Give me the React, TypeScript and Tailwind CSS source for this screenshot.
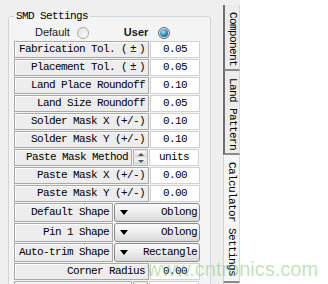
import React from 'react';

type Row =
  | { kind: 'value'; label: React.ReactNode; value: string }
  | { kind: 'spin'; label: string; value: string }
  | { kind: 'select'; label: string; value: string };

const mono = { fontFamily: '"Liberation Mono", "DejaVu Sans Mono", monospace' };
const sans = { fontFamily: '"Liberation Sans", Arial, sans-serif' };

const pm = (text: string) => (
  <>
    {text} (<span className="px-[3px]">±</span>)
  </>
);

const rows: Row[] = [
  { kind: 'value', label: pm('Fabrication Tol.'), value: '0.05' },
  { kind: 'value', label: pm('Placement Tol.'), value: '0.05' },
  { kind: 'value', label: 'Land Place Roundoff', value: '0.10' },
  { kind: 'value', label: 'Land Size Roundoff', value: '0.05' },
  { kind: 'value', label: 'Solder Mask X (+/-)', value: '0.10' },
  { kind: 'value', label: 'Solder Mask Y (+/-)', value: '0.10' },
  { kind: 'spin', label: 'Paste Mask Method', value: 'units' },
  { kind: 'value', label: 'Paste Mask X (+/-)', value: '0.00' },
  { kind: 'value', label: 'Paste Mask Y (+/-)', value: '0.00' },
  { kind: 'select', label: 'Default Shape', value: 'Oblong' },
  { kind: 'select', label: 'Pin 1 Shape', value: 'Oblong' },
  { kind: 'select', label: 'Auto-trim Shape', value: 'Rectangle' },
  { kind: 'value', label: 'Corner Radius', value: '0.00' },
  // only the top edge of this row shows in the window
  { kind: 'spin', label: '', value: '' }
];

const cellText = 'text-[11px] tracking-[-0.6px] leading-none text-black';

const LabelCell = ({ children, width }: { children: React.ReactNode; width: string }) => (
  <div
    className={`${width} h-full flex items-center justify-end pr-[3px] border border-[#a8a8a8] bg-[#ededed] shadow-[inset_1px_1px_0_#ffffff] whitespace-nowrap ${cellText}`}
    style={mono}
  >
    {children}
  </div>
);

const ValueCell = ({ value }: { value: string }) => (
  <div
    className={`w-[50px] h-full flex items-center justify-center border border-[#d2d2d2] bg-white ${cellText}`}
    style={mono}
  >
    {value}
  </div>
);

const Spinner = () => (
  <div className="w-[15px] h-full flex flex-col gap-px px-px py-[1px] border border-[#b7b7b7] bg-[#e6e6e6]">
    <div className="flex-1 flex items-center justify-center rounded-[1px] bg-gradient-to-b from-[#fdfdfd] to-[#d6d6d6]">
      <div className="w-0 h-0 border-l-[3px] border-r-[3px] border-b-[3px] border-l-transparent border-r-transparent border-b-[#4b5563]" />
    </div>
    <div className="flex-1 flex items-center justify-center rounded-[1px] bg-gradient-to-b from-[#fdfdfd] to-[#d6d6d6]">
      <div className="w-0 h-0 border-l-[3px] border-r-[3px] border-t-[3px] border-l-transparent border-r-transparent border-t-[#4b5563]" />
    </div>
  </div>
);

const Select = ({ value }: { value: string }) => (
  <div
    className={`w-[86px] h-full flex items-center justify-between pl-[5px] pr-[2px] rounded-[3px] border border-[#8c8c8c] bg-gradient-to-b from-[#fbfbfb] via-[#ececec] to-[#d9d9d9] ${cellText}`}
    style={mono}
  >
    <div className="w-0 h-0 border-l-[4px] border-r-[4px] border-t-[5px] border-l-transparent border-r-transparent border-t-black" />
    <span>{value}</span>
  </div>
);

const SettingRow = ({ row }: { row: Row }) => {
  if (row.kind === 'select') {
    return (
      <div className="h-[19px] flex gap-px">
        <LabelCell width="w-[99px]">{row.label}</LabelCell>
        <Select value={row.value} />
      </div>
    );
  }
  if (row.kind === 'spin') {
    return (
      <div className="h-[17px] flex gap-px">
        <LabelCell width="w-[118px]">{row.label}</LabelCell>
        <Spinner />
        <ValueCell value={row.value} />
      </div>
    );
  }
  return (
    <div className="h-[17px] flex gap-px">
      <LabelCell width="w-[135px]">{row.label}</LabelCell>
      <ValueCell value={row.value} />
    </div>
  );
};

const Radio = ({ checked }: { checked: boolean }) =>
  checked ? (
    <div className="w-[12px] h-[12px] rounded-full border border-[#5b6770] bg-[#dfe6ea] flex items-center justify-center">
      <div className="w-[8px] h-[8px] rounded-full bg-[radial-gradient(circle_at_40%_35%,#a9e6ff,#2a86b8_55%,#0d3550)]" />
    </div>
  ) : (
    <div className="w-[12px] h-[12px] rounded-full border border-[#a9a9a9] bg-gradient-to-br from-[#e2e2e2] to-[#fbfbfb]" />
  );

const tabs = [
  { label: 'Component', height: 'h-[66px]', active: false },
  { label: 'Land Pattern', height: 'h-[84px]', active: false },
  { label: 'Calculator Settings', height: 'h-[128px]', active: true }
];

export default function App() {
  return (
    <div className="w-[328px] h-[284px] overflow-hidden bg-white flex relative">
      <div className="w-[223px] h-full bg-[#efefef] pl-[8px] pt-[8px]">
        <fieldset className="w-[203px] h-[400px] border border-[#cfd6db] rounded-[3px] bg-[#f4f4f4] pl-[5px]">
          <legend
            className="px-[2px] text-[11px] tracking-[-0.6px] leading-[16px] text-black"
            style={mono}
          >
            SMD Settings
          </legend>
          <div className="h-[17px] flex items-center leading-none text-[#1a1a1a]" style={sans}>
            <span className="ml-[21px] text-[11px]">Default</span>
            <div className="ml-[7px]">
              <Radio checked={false} />
            </div>
            <span className="ml-[35px] font-bold text-[11px]">User</span>
            <div className="ml-[10px]">
              <Radio checked />
            </div>
          </div>
          <div className="flex flex-col gap-px">
            {rows.map((row, i) => (
              <SettingRow key={i} row={row} />
            ))}
          </div>
        </fieldset>
      </div>

      <div className="w-[17px] h-full bg-[#efefef] pt-[5px] flex flex-col">
        {tabs.map((tab) => (
          <div
            key={tab.label}
            className={`${tab.height} flex justify-center pt-[7px] border-r border-[#d8d8d8] ${
              tab.active
                ? 'border-l border-l-[#d4d4d4] bg-[#f6f6f6] border-b-2 border-b-[#8a8a8a]'
                : 'border-l-2 border-l-[#6f6f6f] border-b-2 border-b-[#8a8a8a] bg-[#ececec]'
            }`}
          >
            <span
              className="text-[11px] tracking-[-0.6px] leading-none text-black [writing-mode:vertical-rl] whitespace-nowrap"
              style={mono}
            >
              {tab.label}
            </span>
          </div>
        ))}
      </div>

      <div className="flex-1 h-full bg-white" />

      <div
        className="absolute left-[147px] top-[259px] text-[20px] leading-none text-[rgba(120,190,100,0.45)] pointer-events-none"
        style={sans}
      >
        www.cntronics.com
      </div>
    </div>
  );
}
